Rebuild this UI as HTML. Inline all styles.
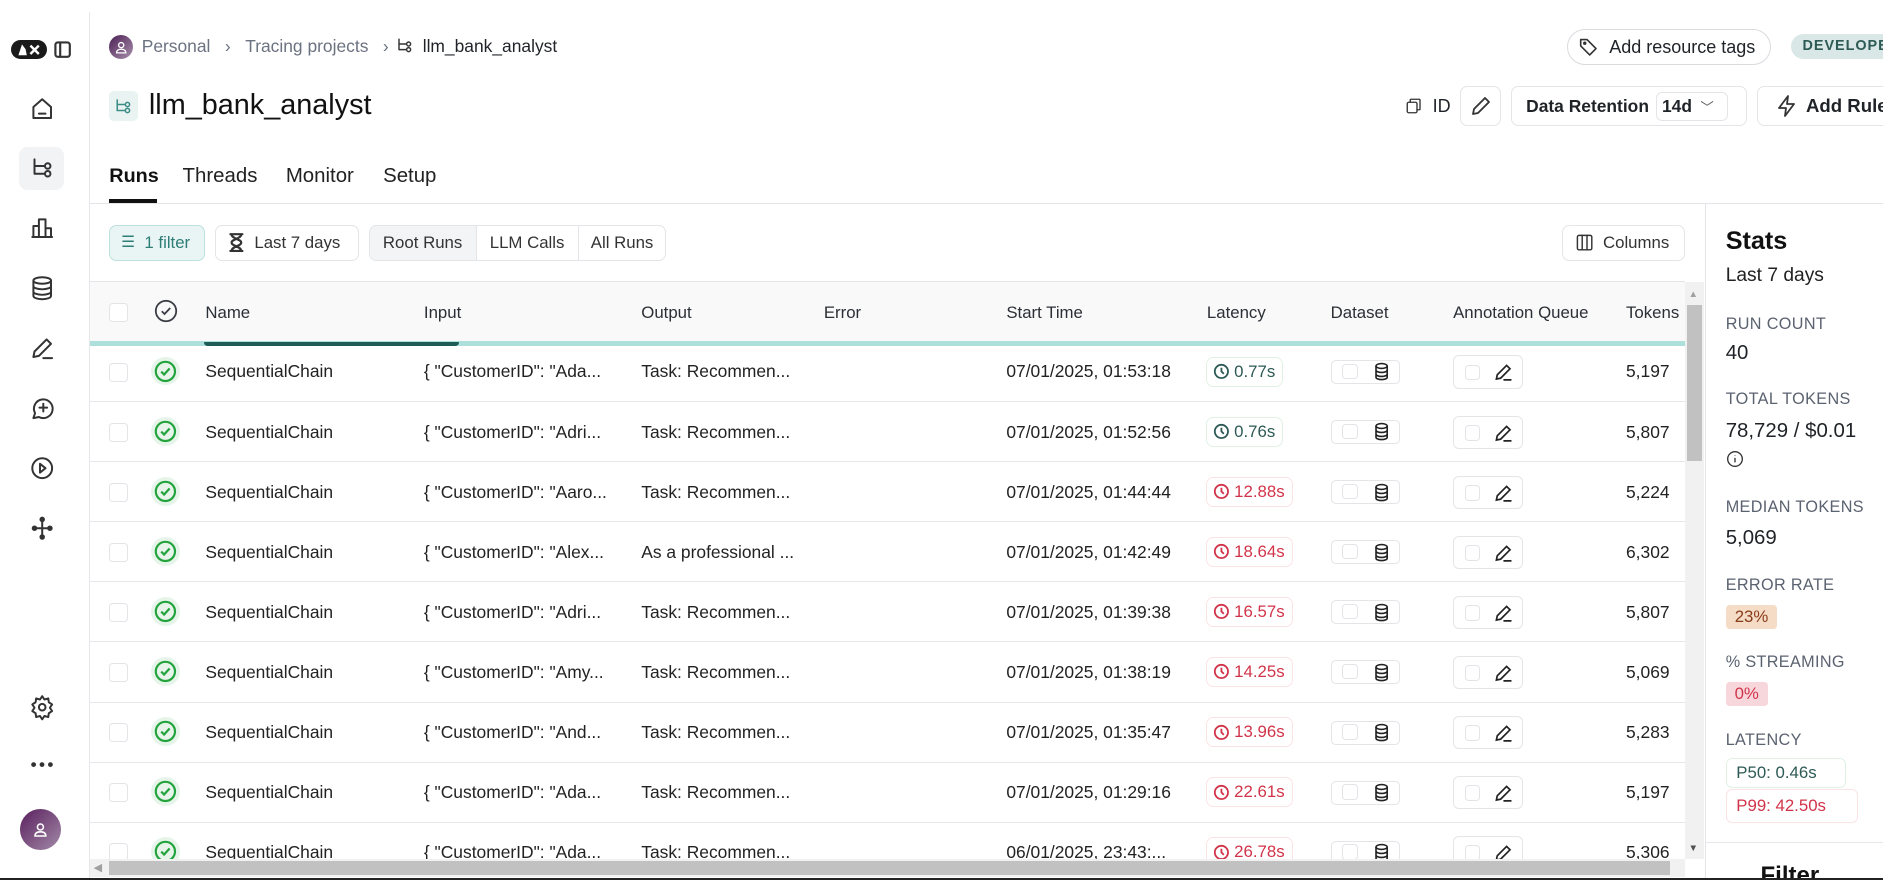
<!DOCTYPE html>
<html><head><meta charset="utf-8">
<style>
*{box-sizing:border-box;margin:0;padding:0}
html,body{width:1883px;height:882px;overflow:hidden;background:#fff}
#root{zoom:1.2009;width:1568px;height:733px;position:relative;font-family:"Liberation Sans",sans-serif;color:#1f2328;font-size:14px;overflow:hidden}
.a{position:absolute}
svg{display:block}
.ic{fill:none;stroke:#333;stroke-width:1.8;stroke-linecap:round;stroke-linejoin:round}
.btn{position:absolute;border:1px solid #e3e5e8;border-radius:6px;background:#fff;display:flex;align-items:center;font-size:14px}
.th{position:absolute;top:252px;font-size:14px;color:#2b2f36}
.row{position:absolute;left:75px;width:1328px;height:50px;border-bottom:1px solid #e6e7ea}
.row>*{position:absolute}
.cb{width:16px;height:16px;border:1px solid #e2e4e7;border-radius:3px;background:#fff}
.st{left:51px;top:12px;width:24px;height:24px;border-radius:12px;background:#e6f4ea}
.t{top:16px;font-size:14.5px;color:#222;white-space:nowrap}
.lat{left:929px;top:12px;height:25px;border:1px solid #e1f1e4;border-radius:6px;padding:0 6px 0 5px;display:flex;align-items:center;font-size:14px;color:#2d5a55}
.lat.r{border-color:#fbe3e6;color:#d1344a}
.ds{left:1033px;top:15px;width:58px;height:20px;border:1px solid #e3e5e8;border-radius:4px}
.aq{left:1135px;top:11px;width:58px;height:28px;border:1px solid #e3e5e8;border-radius:5px}
.lbl{position:absolute;left:1437px;font-size:13.5px;color:#5b6270;letter-spacing:.3px}
.val{position:absolute;left:1437px;font-size:17px;color:#1f2328}
</style></head><body><div id="root">

<!-- sidebar -->
<div class="a" style="left:74px;top:10px;width:1px;height:725px;background:#e6e7ea"></div>
<div class="a" style="left:9px;top:33px;width:30px;height:16px;border-radius:8px;background:#1a1a1a"></div>
<svg class="a" style="left:13px;top:35px" width="22" height="12" viewBox="0 0 22 12"><path d="M2 11L5 2l3 4 1 5z" fill="#fff"/><path d="M12 3l7 7M19 3l-7 7" stroke="#fff" stroke-width="2"/></svg>
<svg class="a ic" style="left:44px;top:33px" width="16" height="16" viewBox="0 0 16 16"><rect x="2" y="2" width="12" height="12" rx="2"/><line x1="6" y1="2" x2="6" y2="14"/></svg>
<svg class="a ic" style="left:24px;top:80px" width="22" height="22" viewBox="0 0 24 24"><path d="M4 20V10l8-7 8 7v10z"/><path d="M9 16h6"/></svg>
<div class="a" style="left:16px;top:122px;width:37px;height:36px;border-radius:7px;background:#f2f3f4"></div>
<svg class="a ic" style="left:24px;top:129px" width="22" height="22" viewBox="0 0 24 24"><path d="M5 4v13h9M5 10h9"/><circle cx="17" cy="10" r="2.5"/><circle cx="17" cy="17" r="2.5"/></svg>
<svg class="a ic" style="left:24px;top:179px" width="22" height="22" viewBox="0 0 24 24"><path d="M4 20V10h5v10M9 20V4h6v16M15 20v-8h5v8zM3 20h18"/></svg>
<svg class="a ic" style="left:24px;top:229px" width="22" height="22" viewBox="0 0 24 24"><ellipse cx="12" cy="5" rx="8" ry="3"/><path d="M4 5v14c0 1.7 3.6 3 8 3s8-1.3 8-3V5M4 10c0 1.7 3.6 3 8 3s8-1.3 8-3M4 15c0 1.7 3.6 3 8 3s8-1.3 8-3"/></svg>
<svg class="a ic" style="left:24px;top:279px" width="22" height="22" viewBox="0 0 24 24"><path d="M4 20l1-5L16 4l4 4L9 19zM13 21h8"/></svg>
<svg class="a ic" style="left:24px;top:329px" width="22" height="22" viewBox="0 0 24 24"><path d="M4 21l1.5-4.5A8.5 8.5 0 1 1 9 20z"/><path d="M13 8v7M9.5 11.5h7"/></svg>
<svg class="a ic" style="left:24px;top:379px" width="22" height="22" viewBox="0 0 24 24"><circle cx="12" cy="12" r="9"/><path d="M10 8l5 4-5 4z"/></svg>
<svg class="a" style="left:24px;top:429px" width="22" height="22" viewBox="0 0 24 24"><g fill="#333"><circle cx="12" cy="4" r="2.5"/><circle cx="5" cy="12" r="2.5"/><circle cx="19" cy="12" r="2.5"/><circle cx="12" cy="20" r="2.5"/></g><path d="M12 4v16M5 12h14" stroke="#333" stroke-width="1.8"/></svg>
<svg class="a ic" style="left:24px;top:578px" width="22" height="22" viewBox="0 0 24 24"><circle cx="12" cy="12" r="3"/><path d="M12 2l2 3 3.5-1 .5 3.5 3 2-2 3 2 3-3 2-.5 3.5-3.5-1-2 3-2-3-3.5 1-.5-3.5-3-2 2-3-2-3 3-2 .5-3.5 3.5 1z"/></svg>
<svg class="a" style="left:25px;top:634px" width="20" height="6" viewBox="0 0 20 6" fill="#333"><circle cx="3" cy="3" r="2"/><circle cx="10" cy="3" r="2"/><circle cx="17" cy="3" r="2"/></svg>
<div class="a" style="left:17px;top:674px;width:34px;height:34px;border-radius:17px;background:linear-gradient(135deg,#5a1f5e,#a28aa7)"></div>
<svg class="a" style="left:27px;top:684px" width="14" height="14" viewBox="0 0 14 14" fill="none" stroke="#fff" stroke-width="1.3"><circle cx="7" cy="5" r="2.5"/><path d="M2.5 12.5c0-2.5 2-3.5 4.5-3.5s4.5 1 4.5 3.5z"/></svg>

<!-- breadcrumb -->
<div class="a" style="left:91px;top:29px;width:20px;height:20px;border-radius:10px;background:linear-gradient(135deg,#4b1f53,#a990ad)"></div>
<svg class="a" style="left:95px;top:33px" width="12" height="12" viewBox="0 0 14 14" fill="none" stroke="#fff" stroke-width="1.3"><circle cx="7" cy="5" r="2.5"/><path d="M2.5 12.5c0-2.5 2-3.5 4.5-3.5s4.5 1 4.5 3.5z"/></svg>
<div class="a" style="left:118px;top:30px;font-size:14.5px;color:#6b7280">Personal&nbsp;&nbsp;&nbsp;›&nbsp;&nbsp;&nbsp;Tracing projects&nbsp;&nbsp;&nbsp;›</div>
<svg class="a ic" style="left:329px;top:30px" width="16" height="16" viewBox="0 0 24 24"><path d="M5 4v13h9M5 10h9"/><circle cx="17" cy="10" r="2.5"/><circle cx="17" cy="17" r="2.5"/></svg>
<div class="a" style="left:352px;top:30px;font-size:14.5px;color:#1f2328">llm_bank_analyst</div>

<div class="a" style="left:1305px;top:24px;width:170px;height:30px;border:1px solid #d9dbde;border-radius:15px"></div>
<svg class="a ic" style="left:1314px;top:30px" width="18" height="18" viewBox="0 0 24 24"><path d="M3 11V4h7l10 10-7 7z"/><circle cx="7.5" cy="8" r="1"/></svg>
<div class="a" style="left:1340px;top:31px;font-size:15px">Add resource tags</div>
<div class="a" style="left:1491px;top:28px;width:90px;height:21px;border-radius:11px;background:#d9e7e6;color:#2d5a55;font-size:12px;font-weight:bold;letter-spacing:.8px;line-height:21px;padding-left:10px">DEVELOPER</div>

<!-- title -->
<div class="a" style="left:91px;top:76px;width:24px;height:25px;border-radius:4px;background:#e8f3f2"></div>
<svg class="a" style="left:94px;top:80px;fill:none;stroke:#3c8d86;stroke-width:1.8" width="17" height="17" viewBox="0 0 24 24"><path d="M5 4v13h9M5 10h9"/><circle cx="17" cy="10" r="2.5"/><circle cx="17" cy="17" r="2.5"/></svg>
<div class="a" style="left:124px;top:74px;font-size:24px;color:#111">llm_bank_analyst</div>

<svg class="a ic" style="left:1170px;top:81px" width="15" height="15" viewBox="0 0 24 24"><rect x="3" y="7" width="13" height="14" rx="2"/><path d="M7 7V4a1 1 0 0 1 1-1h11a1 1 0 0 1 1 1v12a1 1 0 0 1-1 1h-3"/></svg>
<div class="a" style="left:1193px;top:80px;font-size:15px">ID</div>
<div class="btn" style="left:1216px;top:72px;width:34px;height:33px;justify-content:center"><svg class="ic" width="20" height="20" viewBox="0 0 24 24"><path d="M4 20l1-5L16 4l4 4L9 19z"/></svg></div>
<div class="btn" style="left:1258px;top:72px;width:197px;height:33px;padding-left:12px;font-weight:bold;font-size:14.5px">Data Retention
<div style="margin-left:6px;border:1px solid #e3e5e8;border-radius:5px;height:24px;width:60px;padding-left:4px;line-height:22px">14d <span style="font-weight:normal;font-size:11px;color:#555">&nbsp;﹀</span></div></div>
<div class="btn" style="left:1463px;top:72px;width:125px;height:33px;padding-left:14px;font-weight:bold;font-size:15.5px"><svg class="ic" width="20" height="20" viewBox="0 0 24 24" style="margin-right:6px"><path d="M13 2L4 14h7l-1 8 9-12h-7z"/></svg>Add Rule</div>

<!-- tabs -->
<div class="a" style="left:91px;top:137px;font-size:16.5px;font-weight:bold;color:#111">Runs</div>
<div class="a" style="left:91px;top:166px;width:40px;height:3px;background:#111"></div>
<div class="a" style="left:152px;top:137px;font-size:17px;color:#222">Threads</div>
<div class="a" style="left:238px;top:137px;font-size:17px;color:#222">Monitor</div>
<div class="a" style="left:319px;top:137px;font-size:17px;color:#222">Setup</div>
<div class="a" style="left:75px;top:169px;width:1493px;height:1px;background:#e3e5e8"></div>

<!-- filter bar -->
<div class="btn" style="left:91px;top:187px;width:80px;height:30px;background:#e9f5f4;border-color:#bfe0dd;color:#2f7d77;padding-left:9px"><span style="font-size:13px">☰</span>&nbsp;&nbsp;1 filter</div>
<div class="btn" style="left:179px;top:187px;width:120px;height:30px;padding-left:10px;color:#333"><svg class="ic" width="14" height="16" viewBox="0 0 14 16" style="margin-right:8px"><path d="M2 1h10M2 15h10M3 1c0 4 8 4 8 7s-8 3-8 7M11 1c0 4-8 4-8 7s8 3 8 7"/></svg>Last 7 days</div>
<div class="btn" style="left:307px;top:187px;width:248px;height:30px;overflow:hidden;color:#333">
<div style="width:89px;height:100%;background:#f3f4f5;border-right:1px solid #e3e5e8;text-align:center;line-height:28px">Root Runs</div>
<div style="width:85px;height:100%;border-right:1px solid #e3e5e8;text-align:center;line-height:28px">LLM Calls</div>
<div style="flex:1;text-align:center;line-height:28px">All Runs</div></div>
<div class="btn" style="left:1301px;top:187px;width:102px;height:30px;padding-left:10px;color:#333"><svg class="ic" width="16" height="16" viewBox="0 0 24 24" style="margin-right:7px"><rect x="3" y="3" width="18" height="18" rx="2"/><path d="M9 3v18M15 3v18"/></svg>Columns</div>

<!-- stats panel -->
<div class="a" style="left:1420px;top:170px;width:1px;height:565px;background:#e3e5e8"></div>
<div class="a" style="left:1437px;top:189px;font-size:21px;font-weight:bold;color:#111">Stats</div>
<div class="a" style="left:1437px;top:221px;font-size:16px;color:#222">Last 7 days</div>
<div class="lbl" style="top:262px">RUN COUNT</div>
<div class="val" style="top:285px">40</div>
<div class="lbl" style="top:325px">TOTAL TOKENS</div>
<div class="val" style="top:350px">78,729 / $0.01</div>
<svg class="a" style="left:1437px;top:375px" width="15" height="15" viewBox="0 0 16 16" fill="none" stroke="#333" stroke-width="1.2"><circle cx="8" cy="8" r="6.5"/><path d="M8 7v4M8 4.8v.4"/></svg>
<div class="lbl" style="top:415px">MEDIAN TOKENS</div>
<div class="val" style="top:439px">5,069</div>
<div class="lbl" style="top:480px">ERROR RATE</div>
<div class="a" style="left:1437px;top:504px;width:43px;height:20px;border-radius:3px;background:#f4dcc6;color:#8a3d1a;font-size:14px;text-align:center;line-height:20px">23%</div>
<div class="lbl" style="top:544px">% STREAMING</div>
<div class="a" style="left:1437px;top:568px;width:35px;height:20px;border-radius:3px;background:#f8d7dc;color:#d1344a;font-size:14px;text-align:center;line-height:20px">0%</div>
<div class="lbl" style="top:609px">LATENCY</div>
<div class="a" style="left:1437px;top:631px;width:100px;height:25px;border:1px solid #e1f1e4;border-radius:5px;color:#2d5a55;font-size:14px;line-height:23px;padding-left:8px">P50: 0.46s</div>
<div class="a" style="left:1437px;top:657px;width:110px;height:28px;border:1px solid #fbe3e6;border-radius:5px;color:#d1344a;font-size:14px;line-height:26px;padding-left:8px">P99: 42.50s</div>
<div class="a" style="left:1421px;top:701px;width:147px;height:1px;background:#e6e7ea"></div>
<div class="a" style="left:1466px;top:718px;font-size:20px;font-weight:bold;color:#111">Filter</div>

<!-- table -->
<div class="a" style="left:75px;top:234px;width:1328px;height:1px;background:#e3e5e8"></div>
<div class="a" style="left:75px;top:235px;width:1328px;height:50px;background:#f9f9fa"></div>
<div class="a" style="left:75px;top:284px;width:1328px;height:4px;background:#aee0db"></div>
<div class="a" style="left:170px;top:285px;width:212px;height:3px;background:#1f5c57;border-radius:0 0 3px 3px"></div>
<div class="a cb" style="left:91px;top:252px"></div>
<svg class="a" style="left:128px;top:249px" width="20" height="20" viewBox="0 0 20 20" fill="none" stroke="#3a3d44" stroke-width="1.5"><circle cx="10" cy="10" r="8.5"/><path d="M6.5 10.2l2.3 2.3 4.7-5"/></svg>
<div class="th" style="left:171px">Name</div>
<div class="th" style="left:353px">Input</div>
<div class="th" style="left:534px">Output</div>
<div class="th" style="left:686px">Error</div>
<div class="th" style="left:838px">Start Time</div>
<div class="th" style="left:1005px">Latency</div>
<div class="th" style="left:1108px">Dataset</div>
<div class="th" style="left:1210px">Annotation Queue</div>
<div class="th" style="left:1354px">Tokens</div>

<div class="a" style="left:75px;top:288px;width:1328px;height:427px;overflow:hidden">
<div style="position:absolute;left:-75px;top:-288px;width:1500px;height:1000px">
<div class="row" style="top:285px"><div class="cb" style="left:16px;top:17px"></div><div class="st"><svg width="24" height="24" viewBox="0 0 24 24" fill="none" stroke="#23a33c" stroke-width="1.8"><circle cx="12" cy="12" r="8"/><path d="M8.5 12.2l2.4 2.4 4.6-5"/></svg></div><div class="t" style="left:96px">SequentialChain</div><div class="t" style="left:278px">{ "CustomerID": "Ada...</div><div class="t" style="left:459px">Task: Recommen...</div><div class="t" style="left:763px">07/01/2025, 01:53:18</div><div class="lat"><svg width="14" height="14" viewBox="0 0 14 14" fill="none" stroke="currentColor" stroke-width="1.5"><circle cx="7" cy="7" r="5.5"/><path d="M7 4v3l2 2"/></svg>&nbsp;0.77s</div><div class="ds"><div class="cb" style="position:absolute;left:9px;top:2px;width:13px;height:13px"></div><svg style="position:absolute;left:34px;top:1px" width="16" height="16" viewBox="0 0 24 24" fill="none" stroke="#222" stroke-width="2"><ellipse cx="12" cy="5" rx="7" ry="3"/><path d="M5 5v14c0 1.7 3.1 3 7 3s7-1.3 7-3V5M5 10c0 1.7 3.1 3 7 3s7-1.3 7-3M5 15c0 1.7 3.1 3 7 3s7-1.3 7-3"/></svg></div><div class="aq"><div class="cb" style="position:absolute;left:9px;top:7px;width:13px;height:13px"></div><svg style="position:absolute;left:32px;top:5px" width="17" height="17" viewBox="0 0 24 24" fill="none" stroke="#222" stroke-width="2" stroke-linecap="round"><path d="M4 20l1-5L16 4l4 4L9 19zM13 21h8"/></svg></div><div class="t" style="left:1279px">5,197</div></div>
</div></div>

<!-- scrollbars -->
<div class="a" style="left:1403px;top:235px;width:16px;height:480px;background:#f1f1f1"></div>
<div class="a" style="left:1406px;top:241px;font-size:8px;color:#a0a0a0">▲</div>
<div class="a" style="left:1405px;top:254px;width:12px;height:130px;background:#c1c1c1"></div>
<div class="a" style="left:1406px;top:702px;font-size:8px;color:#505050">▼</div>
<div class="a" style="left:75px;top:715px;width:1328px;height:15px;background:#f1f1f1"></div>
<div class="a" style="left:78px;top:717px;font-size:9px;color:#a0a0a0">◀</div>
<div class="a" style="left:91px;top:717px;width:1300px;height:12px;background:#c1c1c1"></div>
<div class="a" style="left:0;top:731px;width:1568px;height:2px;background:#222"></div>

<script>
var data=[["Ada","Task: Recommen...","07/01/2025, 01:53:18","0.77s",0,"5,197"],
["Adri","Task: Recommen...","07/01/2025, 01:52:56","0.76s",0,"5,807"],
["Aaro","Task: Recommen...","07/01/2025, 01:44:44","12.88s",1,"5,224"],
["Alex","As a professional ...","07/01/2025, 01:42:49","18.64s",1,"6,302"],
["Adri","Task: Recommen...","07/01/2025, 01:39:38","16.57s",1,"5,807"],
["Amy","Task: Recommen...","07/01/2025, 01:38:19","14.25s",1,"5,069"],
["And","Task: Recommen...","07/01/2025, 01:35:47","13.96s",1,"5,283"],
["Ada","Task: Recommen...","07/01/2025, 01:29:16","22.61s",1,"5,197"],
["Ada","Task: Recommen...","06/01/2025, 23:43:...","26.78s",1,"5,306"]];
var tpl=document.querySelector('.row');var par=tpl.parentNode;
data.forEach(function(d,i){var r=i==0?tpl:tpl.cloneNode(true);r.style.top=(285+50*i)+'px';var t=r.querySelectorAll('.t');t[1].textContent='{ "CustomerID": "'+d[0]+'...';t[2].textContent=d[1];t[3].textContent=d[2];t[4].textContent=d[5];var l=r.querySelector('.lat');l.lastChild.textContent='\u00a0'+d[3];if(d[4])l.classList.add('r');if(i)par.appendChild(r);});
</script>
</div></body></html>
